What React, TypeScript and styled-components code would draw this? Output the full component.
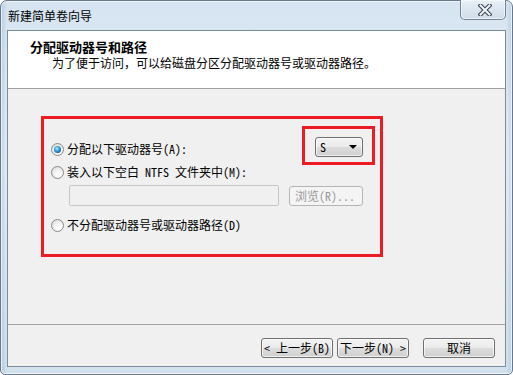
import React from 'react';
import styled, { createGlobalStyle, css } from 'styled-components';

const Global = createGlobalStyle`
  html, body { margin: 0; padding: 0; background: #ffffff; }
  body {
    width: 513px; height: 375px; overflow: hidden;
    font-family: "Noto Sans Mono CJK SC", "Noto Sans CJK SC", "Noto Sans", sans-serif;
    font-size: 12px; color: #000;
  }
`;

const Window = styled.div`
  box-sizing: border-box;
  width: 513px;
  height: 375px;
  border: 1px solid #66788c;
  border-radius: 7px 7px 5px 5px;
  background:
    linear-gradient(90deg, rgba(120,160,200,0.35) 0px, rgba(255,255,255,0) 6px, rgba(255,255,255,0) 505px, rgba(120,160,200,0.3) 511px),
    linear-gradient(180deg, #d6e4f1 0%, #e6eff8 45%, #d2e1ee 100%);
  box-shadow: inset 0 0 0 1px rgba(255,255,255,0.7);
  padding: 0 6px 7px 6px;
  display: flex;
  flex-direction: column;
`;

const TitleBar = styled.div`
  height: 29px;
  display: flex;
  justify-content: space-between;
  align-items: flex-start;
  flex: none;
`;

const TitleText = styled.div`
  margin: 8px 0 0 1px;
  font-family: "Noto Sans CJK SC", sans-serif;
  font-size: 12px;
  line-height: 14px;
  color: #000;
`;

const CloseButton = styled.div`
  box-sizing: border-box;
  width: 46px;
  height: 20px;
  margin-top: -1px;
  border: 1px solid rgba(70, 88, 110, 0.7);
  border-top: none;
  border-radius: 0 0 5px 5px;
  background: linear-gradient(180deg, #e9f0f7 0%, #dbe6f0 50%, #cfdcea 100%);
  box-shadow: inset 0 0 0 1px rgba(255,255,255,0.6);
  display: flex;
  align-items: center;
  justify-content: center;
  padding: 1px 0 0 3px;

  svg { display: block; }
`;

const Client = styled.div`
  flex: 1;
  display: flex;
  flex-direction: column;
  border: 1px solid #7d8b99;
  background: #f0f0f0;
`;

const Header = styled.div`
  box-sizing: border-box;
  height: 58px;
  flex: none;
  background: #ffffff;
  border-bottom: 1px solid #a0a0a0;
  padding: 8px 0 0 22px;
`;

const HeaderTitle = styled.div`
  font-family: "Noto Sans CJK SC", sans-serif;
  font-weight: 700;
  font-size: 13px;
  line-height: 16px;
`;

const HeaderSub = styled.div`
  margin-top: 1px;
  padding-left: 22px;
  font-size: 12px;
  line-height: 14px;
`;

const Body = styled.div`
  box-sizing: border-box;
  height: 236px;
  flex: none;
  border-bottom: 1px solid #a0a0a0;
  padding: 27px 0 0 33px;
`;

const Highlight = styled.div`
  box-sizing: border-box;
  border: 3px solid #ed1c24;
`;

const OptionsBox = styled(Highlight)`
  width: 342px;
  height: 141px;
  display: flex;
  flex-direction: column;
  padding: 7px 5px 0 7px;
`;

const ComboMark = styled(Highlight)`
  padding: 8px 9px 5px 10px;
`;

const TopRow = styled.div`
  display: flex;
  justify-content: space-between;
  align-items: flex-start;
`;

const Option = styled.div<{ $top?: number }>`
  display: flex;
  align-items: center;
  height: 14px;
  line-height: 14px;
  margin-top: ${p => p.$top ?? 0}px;
  white-space: pre;
`;

const Radio = styled.span<{ $checked?: boolean }>`
  box-sizing: border-box;
  width: 13px;
  height: 13px;
  flex: none;
  margin-right: 3px;
  border-radius: 50%;
  border: 1px solid #8a8a8a;
  background: radial-gradient(circle at 62% 66%, #ffffff 0%, #f6f6f6 35%, #d2d2d2 100%);
  position: relative;
  ${p => p.$checked && css`
    &::after {
      content: "";
      position: absolute;
      left: 2px;
      top: 2px;
      width: 7px;
      height: 7px;
      border-radius: 50%;
      background: radial-gradient(circle at 42% 38%, #b8ecff 0%, #3aa0e0 40%, #155a98 75%, #0a3564 100%);
    }
  `}
`;

const Combo = styled.div`
  box-sizing: border-box;
  width: 48px;
  height: 20px;
  border: 1px solid #707070;
  border-radius: 3px;
  background: linear-gradient(180deg, #f3f3f3 0%, #ebebeb 48%, #dcdcdc 52%, #cfcfcf 100%);
  box-shadow: inset 0 0 0 1px rgba(255,255,255,0.65);
  display: flex;
  align-items: center;
  justify-content: space-between;
  padding: 0 4px 0 4px;
  line-height: 14px;
`;

const Arrow = styled.span`
  width: 0;
  height: 0;
  border-left: 4px solid transparent;
  border-right: 4px solid transparent;
  border-top: 4px solid #000;
  margin-right: 1px;
`;

const FolderRow = styled.div`
  display: flex;
  align-items: center;
  margin: 6px 0 0 18px;
`;

const PathInput = styled.div`
  box-sizing: border-box;
  width: 210px;
  height: 21px;
  border: 1px solid #c6c6c6;
  border-radius: 2px;
  background: #f0f0f0;
`;

const BrowseButton = styled.div`
  box-sizing: border-box;
  width: 74px;
  height: 20px;
  margin-left: 10px;
  border: 1px solid #b3b6b8;
  border-radius: 3px;
  background: #f4f4f4;
  color: #9a9a9a;
  display: flex;
  align-items: center;
  padding-left: 5px;
  line-height: 14px;
  white-space: pre;
`;

const Footer = styled.div`
  flex: 1;
  display: flex;
  justify-content: flex-end;
  align-items: flex-start;
  padding: 13px 10px 0 0;
`;

const Button = styled.div<{ $gap?: number }>`
  box-sizing: border-box;
  width: 72px;
  height: 20px;
  margin-left: ${p => p.$gap ?? 0}px;
  border: 1px solid #707070;
  border-radius: 3px;
  background: linear-gradient(180deg, #f2f2f2 0%, #ebebeb 48%, #dddddd 52%, #cfcfcf 100%);
  box-shadow: inset 0 0 0 1px rgba(255,255,255,0.7);
  display: flex;
  align-items: center;
  justify-content: center;
  line-height: 14px;
  white-space: pre;
`;

function CloseGlyph() {
  return (
    <svg width="14" height="12" viewBox="0 0 14 12">
      <path d="M2.5 1.5 L11.5 10.5 M11.5 1.5 L2.5 10.5" stroke="#3f4854" strokeWidth="4.2" strokeLinecap="square" fill="none" />
      <path d="M2.5 1.5 L11.5 10.5 M11.5 1.5 L2.5 10.5" stroke="#f2f5f9" strokeWidth="2" strokeLinecap="square" fill="none" />
    </svg>
  );
}

export default function App() {
  return (
    <>
      <Global />
      <Window>
        <TitleBar>
          <TitleText>新建简单卷向导</TitleText>
          <CloseButton><CloseGlyph /></CloseButton>
        </TitleBar>
        <Client>
          <Header>
            <HeaderTitle>分配驱动器号和路径</HeaderTitle>
            <HeaderSub>为了便于访问，可以给磁盘分区分配驱动器号或驱动器路径。</HeaderSub>
          </Header>
          <Body>
            <OptionsBox>
              <TopRow>
                <Option $top={16}>
                  <Radio $checked />分配以下驱动器号(A):
                </Option>
                <ComboMark>
                  <Combo>S<Arrow /></Combo>
                </ComboMark>
              </TopRow>
              <Option>
                <Radio />装入以下空白 NTFS 文件夹中(M):
              </Option>
              <FolderRow>
                <PathInput />
                <BrowseButton>浏览(R)...</BrowseButton>
              </FolderRow>
              <Option $top={12}>
                <Radio />不分配驱动器号或驱动器路径(D)
              </Option>
            </OptionsBox>
          </Body>
          <Footer>
            <Button>{'< 上一步(B)'}</Button>
            <Button $gap={4}>{'下一步(N) >'}</Button>
            <Button $gap={14}>取消</Button>
          </Footer>
        </Client>
      </Window>
    </>
  );
}
